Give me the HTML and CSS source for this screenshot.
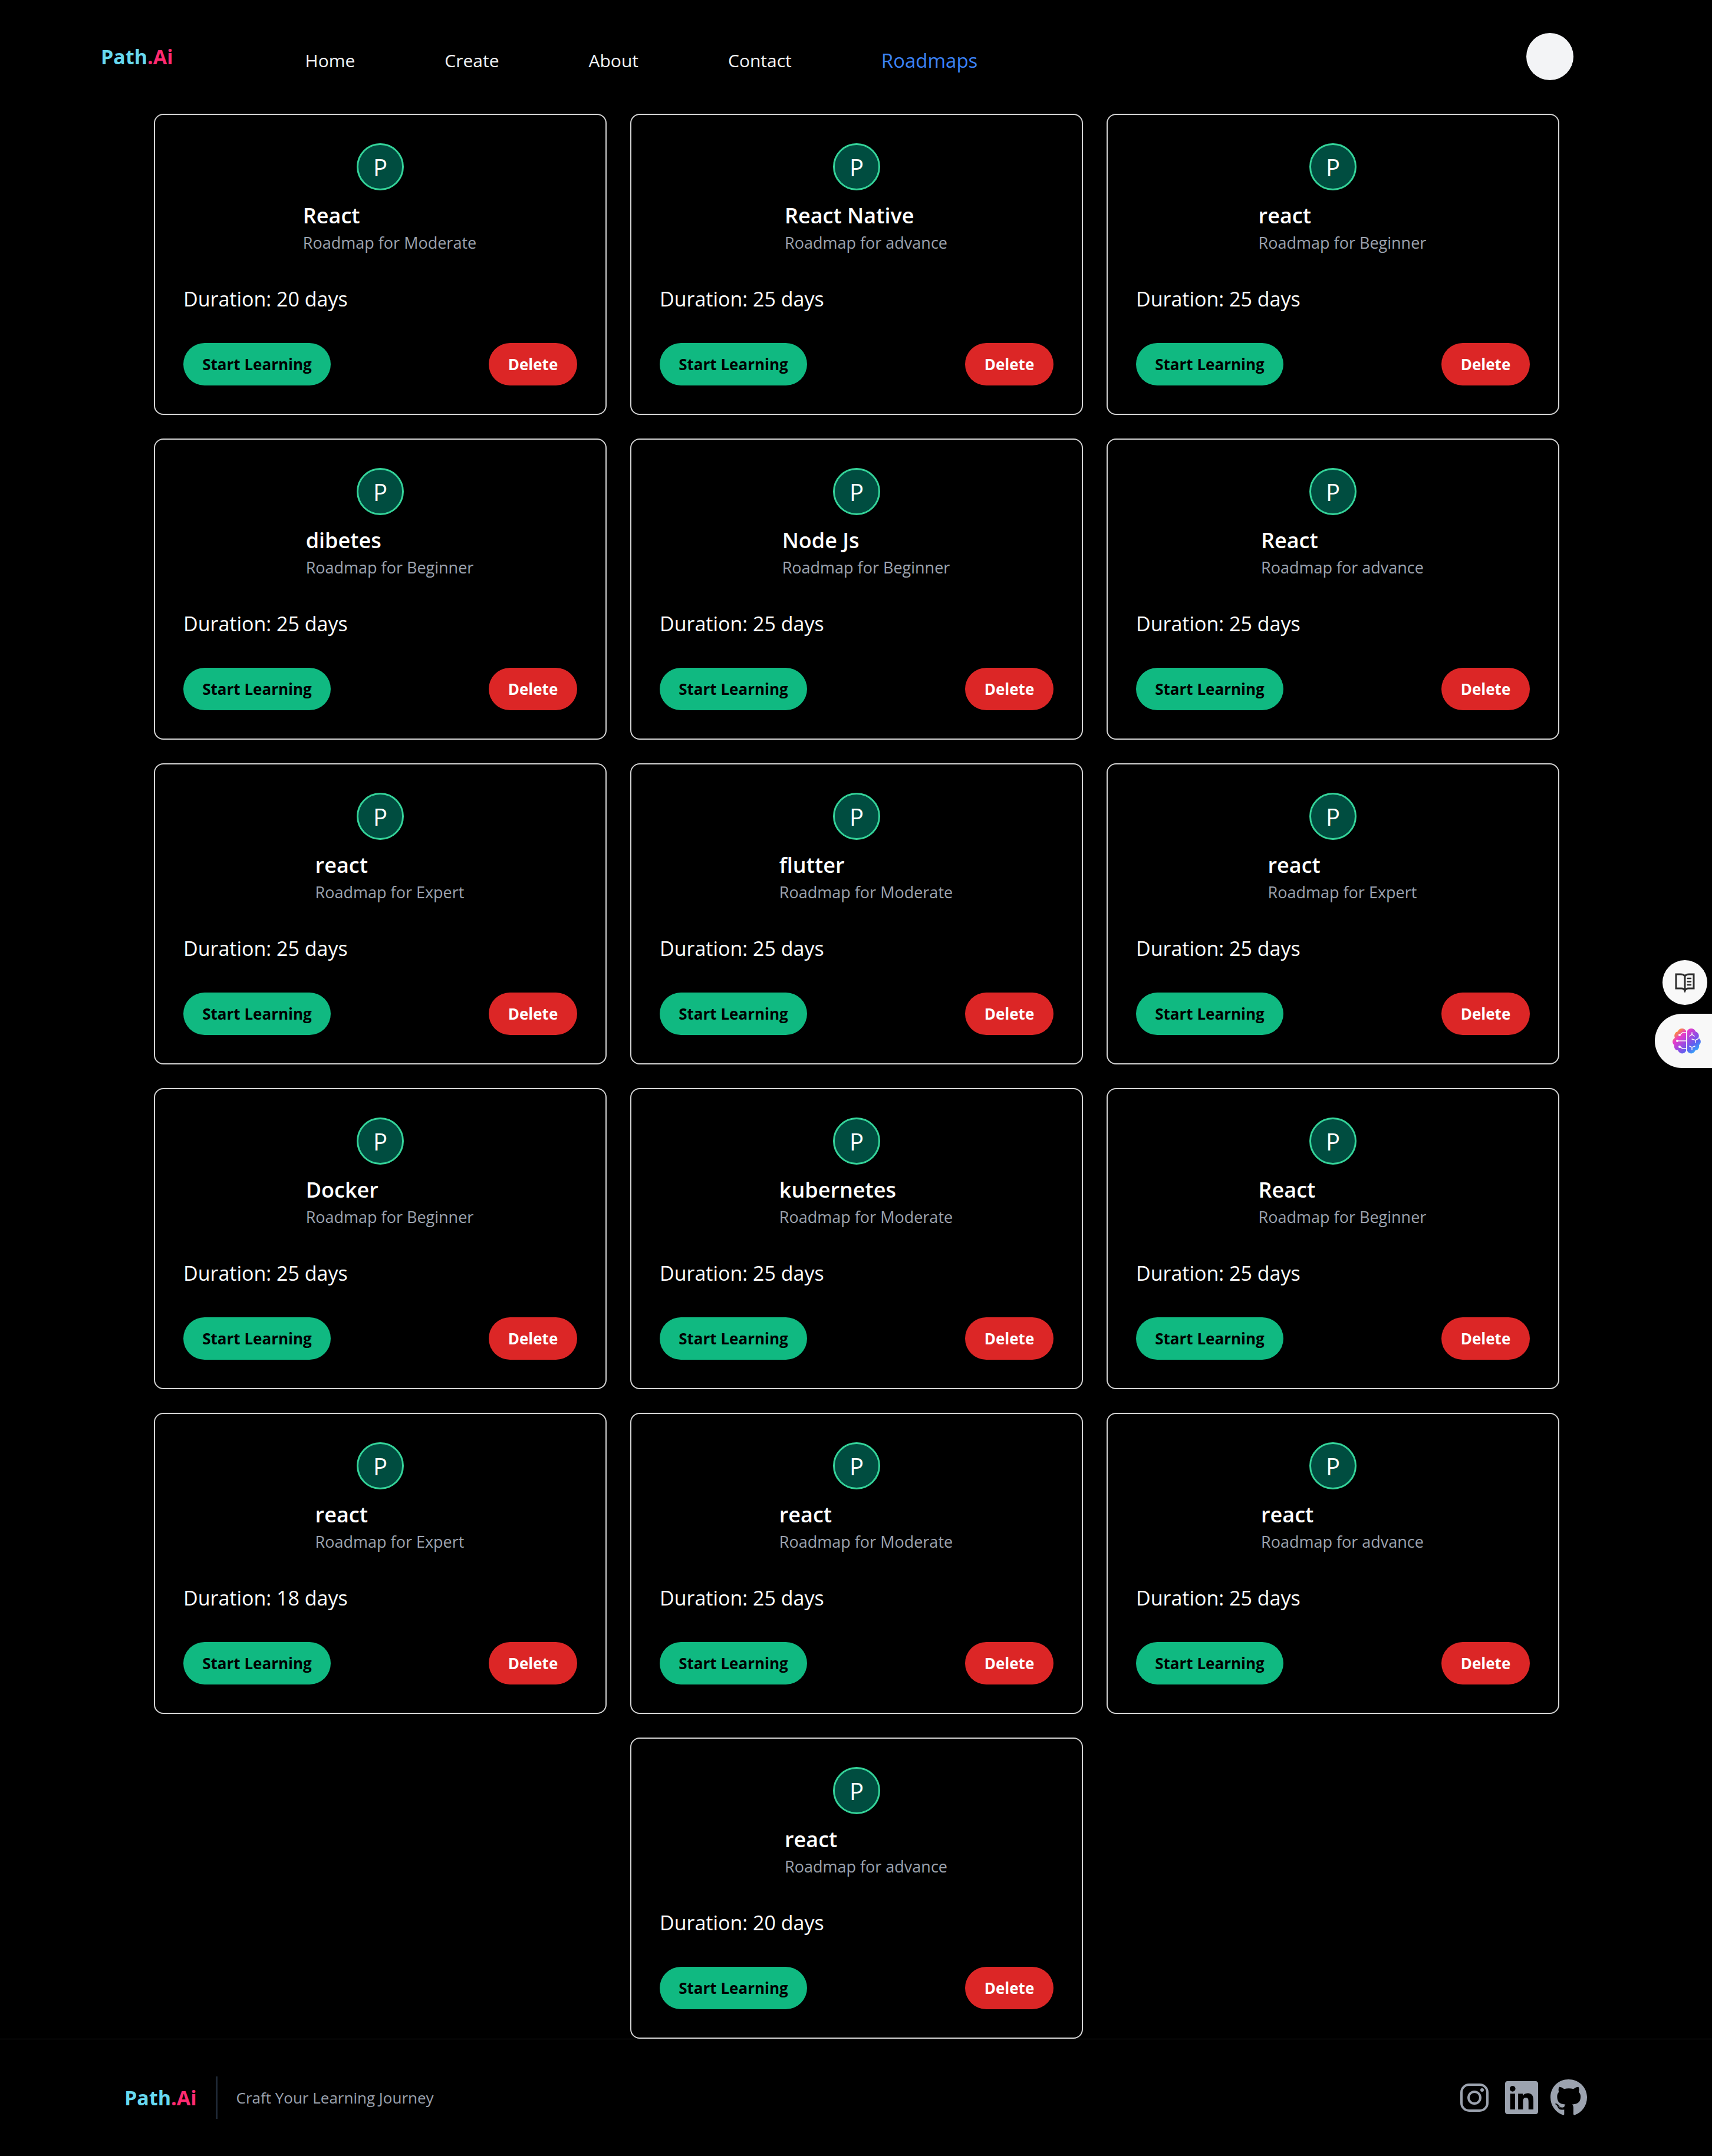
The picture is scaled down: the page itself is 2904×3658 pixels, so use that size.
FILE: index.html
```html
<!DOCTYPE html>
<html lang="en">
<head>
<meta charset="utf-8">
<title>Path.Ai</title>
<link rel="stylesheet" href="styles.css">
</head>
<body>
<header class="header">
  <a class="logo" href="#">Path<span class="logo-accent">.Ai</span></a>
  <nav class="nav">
    <a class="nav-link" href="#">Home</a>
    <a class="nav-link" href="#">Create</a>
    <a class="nav-link" href="#">About</a>
    <a class="nav-link" href="#">Contact</a>
    <a class="nav-link nav-link-active" href="#">Roadmaps</a>
  </nav>
  <button class="profile" type="button" aria-label="Profile"></button>
</header>
<main class="cards" id="cards"></main>
<footer class="footer">
  <a class="logo" href="#">Path<span class="logo-accent">.Ai</span></a>
  <p class="tagline">Craft Your Learning Journey</p>
  <div class="social">
    <a class="social-link" href="#" aria-label="Instagram"><svg width="64" height="64" viewBox="0 0 64 64"><rect x="10" y="10" width="44" height="44" rx="13" fill="none" stroke="currentColor" stroke-width="4"/><circle cx="32" cy="32" r="10" fill="none" stroke="currentColor" stroke-width="4"/><circle cx="45" cy="19" r="3" fill="currentColor"/></svg></a>
    <a class="social-link" href="#" aria-label="LinkedIn"><svg width="64" height="64" viewBox="-32 0 512 512"><path fill="currentColor" d="M416 32H31.9C14.3 32 0 46.5 0 64.3v383.4C0 465.5 14.3 480 31.9 480H416c17.6 0 32-14.5 32-32.3V64.3c0-17.8-14.4-32.3-32-32.3zM135.4 416H69V202.2h66.5V416zm-33.2-243c-21.3 0-38.5-17.3-38.5-38.5S80.9 96 102.2 96c21.2 0 38.5 17.3 38.5 38.5 0 21.3-17.2 38.5-38.5 38.5zm282.1 243h-66.4V312c0-24.8-.5-56.7-34.5-56.7-34.6 0-39.9 27-39.9 54.9V416h-66.4V202.2h63.7v29.2h.9c8.9-16.8 30.6-34.5 62.9-34.5 67.2 0 79.7 44.3 79.7 101.9V416z"/></svg></a>
    <a class="social-link" href="#" aria-label="GitHub"><svg width="64" height="64" viewBox="-8 0 512 512"><path fill="currentColor" d="M165.9 397.4c0 2-2.3 3.6-5.2 3.6-3.3.3-5.6-1.3-5.6-3.6 0-2 2.3-3.6 5.2-3.6 3-.3 5.6 1.3 5.6 3.6zm-31.1-4.5c-.7 2 1.3 4.3 4.3 4.9 2.6 1 5.6 0 6.2-2s-1.3-4.3-4.3-5.2c-2.6-.7-5.5.3-6.2 2.3zm44.2-1.7c-2.9.7-4.9 2.6-4.6 4.9.3 2 2.9 3.3 5.9 2.6 2.9-.7 4.9-2.6 4.6-4.6-.3-1.9-3-3.2-5.9-2.9zM244.8 8C106.1 8 0 113.3 0 252c0 110.9 69.8 205.8 169.5 239.2 12.8 2.3 17.3-5.6 17.3-12.1 0-6.2-.3-40.4-.3-61.4 0 0-70 15-84.7-29.8 0 0-11.4-29.1-27.8-36.6 0 0-22.9-15.7 1.6-15.4 0 0 24.9 2 38.6 25.8 21.9 38.6 58.6 27.5 72.9 20.9 2.3-16 8.8-27.1 16-33.7-55.9-6.2-112.3-14.3-112.3-110.5 0-27.5 7.6-41.3 23.6-58.9-2.6-6.5-11.1-33.3 2.6-67.9 20.9-6.5 69 27 69 27 20-5.6 41.5-8.5 62.8-8.5s42.8 2.9 62.8 8.5c0 0 48.1-33.6 69-27 13.7 34.7 5.2 61.4 2.6 67.9 16 17.7 25.8 31.5 25.8 58.9 0 96.5-58.9 104.2-114.8 110.5 9.2 7.9 17 22.9 17 46.4 0 33.7-.3 75.4-.3 83.6 0 6.5 4.6 14.4 17.3 12.1C428.2 457.8 496 362.9 496 252 496 113.3 383.5 8 244.8 8zM97.2 352.9c-1.3 1-1 3.3.7 5.2 1.6 1.6 3.9 2.3 5.2 1 1.3-1 1-3.3-.7-5.2-1.6-1.6-3.9-2.3-5.2-1zm-10.8-8.1c-.7 1.3.3 2.9 2.3 3.9 1.6 1 3.6.7 4.3-.7.7-1.3-.3-2.9-2.3-3.9-2-.6-3.6-.3-4.3.7zm32.4 35.6c-1.6 1.3-1 4.3 1.3 6.2 2.3 2.3 5.2 2.6 6.5 1 1.3-1.3.7-4.3-1.3-6.2-2.2-2.3-5.2-2.6-6.5-1zm-11.4-14.7c-1.6 1-1.6 3.6 0 5.9 1.6 2.3 4.3 3.3 5.6 2.3 1.6-1.3 1.6-3.9 0-6.2-1.4-2.3-4-3.3-5.6-2z"/></svg></a>
  </div>
</footer>
<aside class="tools">
  <button class="tool-round" type="button" aria-label="Reader">
    <svg width="36" height="34" viewBox="0 0 36 34" fill="none" stroke="#2e2e2e" stroke-width="3"><path d="M18 6C16 3.500 14 3 11 3H3V27H12C15 27 17 28 18 31C19 28 21 27 24 27H33V3H25C22 3 20 3.500 18 6V29"/><path d="M22.500 10H28M22.500 15.500H28M22.500 21H28" stroke-width="2.500" stroke-linecap="round"/></svg>
  </button>
  <button class="tool-tab" type="button" aria-label="Assistant">
    <svg width="48" height="44" viewBox="0 0 48 44"><defs><linearGradient id="brain" x1="0" y1="0" x2="1" y2="1"><stop offset="0.100" stop-color="#ffa31a"/><stop offset="0.300" stop-color="#e83ccb"/><stop offset="0.500" stop-color="#a04ae0"/><stop offset="0.700" stop-color="#5b62f0"/><stop offset="0.900" stop-color="#2fb4fb"/></linearGradient></defs><path fill="url(#brain)" d="M23 5C20-1 11 0 9 6C4 7 2 13 4 17C-1 20-1 26 3 29C2 34 5 38 9 38C12 45 20 45 23 39ZM25 5C28-1 37 0 39 6C44 8 46 12 44 17C49 20 49 26 45 29C46 34 43 38 39 38C36 45 28 45 25 39Z"/><g fill="none" stroke="#f8f8f8" stroke-width="1.500" stroke-linecap="round"><path d="M23 8H17L12 12M23 22H8M23 35H17L12 32M33 8V11L29 14M33 11L37 14M33 19L39 21L44 18M39 21V25M29 31L33 33L38 31M33 33V37"/></g><g fill="#f8f8f8"><circle cx="12" cy="12" r="2"/><circle cx="8" cy="22" r="2"/><circle cx="12" cy="32" r="2"/></g></svg>
  </button>
</aside>
<script src="cards.js"></script>
</body>
</html>
```
FILE: styles.css
```css
* { box-sizing: border-box; }
body {
  margin: 0;
  background: #000;
  color: #fff;
  font-family: "Open Sans", "Noto Sans", sans-serif;
}
a { color: inherit; text-decoration: none; }
button { border: 0; padding: 0; font-family: inherit; cursor: pointer; }
svg { display: block; }

.header {
  display: flex;
  align-items: center;
  height: 192px;
  padding: 0 235px 0 171px;
}
.logo {
  color: #67d9f0;
  font-size: 34px;
  font-weight: 700;
  line-height: 48px;
}
.logo-accent { color: #ff2a70; }
.nav {
  display: flex;
  align-items: center;
  gap: 152px;
  margin-left: 224px;
  padding-top: 13px;
}
.nav-link { font-size: 30px; line-height: 48px; color: #f3f4f6; }
.nav-link-active { font-size: 33px; color: #3b82f6; }
.profile {
  width: 80px;
  height: 80px;
  margin-left: auto;
  border-radius: 50%;
  background: #f3f4f6;
}

.cards {
  display: flex;
  flex-wrap: wrap;
  justify-content: center;
  gap: 40px;
  padding: 1px 259px 0 261px;
}
.card {
  width: calc((100% - 80px) / 3);
  padding: 48px;
  border: 2px solid #d4d4d4;
  border-radius: 16px;
}
.avatar {
  display: flex;
  align-items: center;
  justify-content: center;
  width: 80px;
  height: 80px;
  margin: 0 auto;
  border: 3px solid #34d399;
  border-radius: 50%;
  background: #004d40;
  font-size: 40px;
}
.heading {
  width: fit-content;
  margin: 16px auto 0;
  padding-left: 32px;
}
.title { margin: 0; font-size: 36px; font-weight: 600; line-height: 54px; }
.level { margin: 0; color: #9ca3af; font-size: 27px; line-height: 38px; }
.duration { margin: 48px 0 0; font-size: 34px; line-height: 56px; }
.actions {
  display: flex;
  justify-content: space-between;
  margin-top: 47px;
}
.button {
  height: 72px;
  border-radius: 36px;
  font-size: 26px;
  font-weight: 700;
}
.button-start { width: 250px; background: #10b981; color: #000; }
.button-delete { width: 150px; background: #dc2626; color: #fff; }

.footer {
  display: flex;
  align-items: center;
  padding: 63px 211px;
  border-top: 1px solid #262626;
}
.tagline {
  margin: 0 0 0 32px;
  padding-left: 32px;
  border-left: 3px solid #1f2937;
  color: #9ca3af;
  font-size: 26px;
  line-height: 72px;
}
.social { display: flex; gap: 16px; margin-left: auto; color: #9ca3af; }

.tools {
  position: fixed;
  top: 1629px;
  right: 0;
  display: flex;
  flex-direction: column;
  align-items: flex-end;
  gap: 15px;
}
.tool-round, .tool-tab { display: flex; align-items: center; background: #f8f8f8; }
.tool-round {
  justify-content: center;
  width: 76px;
  height: 76px;
  margin-right: 8px;
  border-radius: 50%;
}
.tool-tab {
  width: 97px;
  height: 92px;
  padding-left: 30px;
  border-radius: 46px 0 0 46px;
}
```
FILE: cards.js
```js
const roadmaps = [
  ["React", "Moderate", 20], ["React Native", "advance", 25], ["react", "Beginner", 25],
  ["dibetes", "Beginner", 25], ["Node Js", "Beginner", 25], ["React", "advance", 25],
  ["react", "Expert", 25], ["flutter", "Moderate", 25], ["react", "Expert", 25],
  ["Docker", "Beginner", 25], ["kubernetes", "Moderate", 25], ["React", "Beginner", 25],
  ["react", "Expert", 18], ["react", "Moderate", 25], ["react", "advance", 25],
  ["react", "advance", 20],
];

document.getElementById("cards").innerHTML = roadmaps.map(([title, level, days]) => `
  <article class="card">
    <div class="avatar">P</div>
    <div class="heading">
      <h2 class="title">${title}</h2>
      <p class="level">Roadmap for ${level}</p>
    </div>
    <p class="duration">Duration: ${days} days</p>
    <div class="actions">
      <button class="button button-start" type="button">Start Learning</button>
      <button class="button button-delete" type="button">Delete</button>
    </div>
  </article>`).join("");
```
